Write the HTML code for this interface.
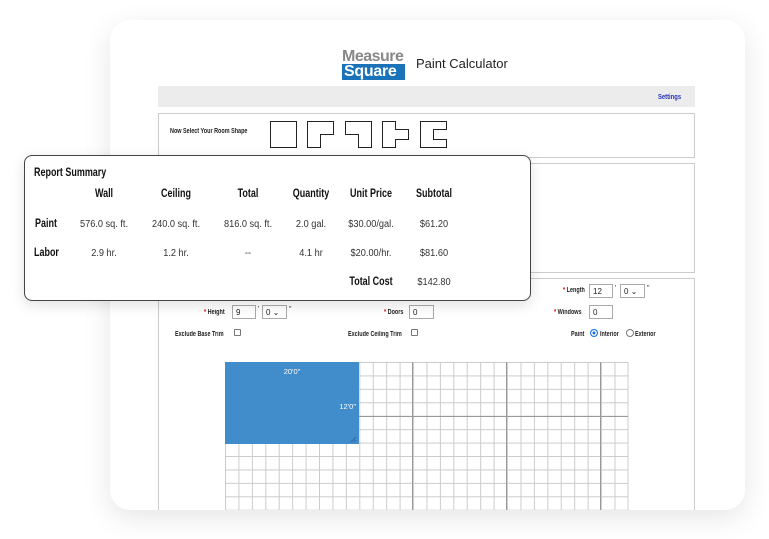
<!DOCTYPE html>
<html><head><meta charset="utf-8"><style>
*{box-sizing:border-box;margin:0;padding:0}
body{width:769px;height:539px;background:#fff;position:relative;overflow:hidden;font-family:"Liberation Sans",sans-serif;color:#222}
.a{position:absolute}
.card{left:110px;top:20px;width:635px;height:490px;background:#fff;border-radius:20px;box-shadow:0 8px 28px rgba(0,0,0,.10);overflow:hidden}
.n{font-weight:bold;transform:scaleX(.78);transform-origin:0 0;white-space:nowrap}
.box{border:1px solid #ccc;background:#fff}
.inp{border:1px solid #aaa;height:14px;font-size:8px;padding:2px 3px;background:#fff}
.sm{font-size:7px}
.red{color:#d00}
.pop{left:24px;top:155px;width:507px;height:146px;background:#fff;border:1px solid #444;border-radius:8px;box-shadow:0 4px 14px rgba(0,0,0,.12)}
.c{position:absolute;transform:translateX(-50%) scaleX(.92);white-space:nowrap;font-size:10px;color:#333}
.h{font-weight:bold;font-size:11.5px;color:#111}
.c.h{transform:translateX(-50%) scaleX(.78)}
.a.h{transform:scaleX(.78);transform-origin:0 0;white-space:nowrap}
</style></head><body>
<div class="a card"></div>
<!-- logo -->
<div class="a" style="left:342px;top:49px;font-weight:bold;font-size:16px;color:#888;letter-spacing:-0.5px;line-height:16px">Measure</div>
<div class="a" style="left:342px;top:64px;width:63px;height:16px;background:#1a73b8;color:#fff;font-weight:bold;font-size:16px;line-height:16px;padding-left:2px;letter-spacing:-0.3px">Square</div>
<div class="a" style="left:416px;top:56px;font-size:13px">Paint Calculator</div>
<div class="a" style="left:158px;top:86px;width:537px;height:21px;background:#ececec"></div>
<div class="a n" style="left:658px;top:92px;font-size:7.5px;color:#2233bb">Settings</div>
<div class="a box" style="left:158px;top:113px;width:537px;height:45px"></div>
<div class="a n" style="left:170px;top:128px;font-size:7px">Now Select Your Room Shape</div>
<svg class="a" style="left:268px;top:119px" width="182" height="32" fill="#fff" stroke="#222" stroke-width="1">
<rect x="2.5" y="2.5" width="26" height="26"/>
<path d="M39.5 2.5H65.5V15.5H52.5V28.5H39.5Z"/>
<path d="M77.5 2.5H103.5V28.5H90.5V15.5H77.5Z"/>
<path d="M114.5 2.5H127.5V10.5H140.5V20.5H127.5V28.5H114.5Z"/>
<path d="M152.5 2.5H178.5V10.5H165.5V20.5H178.5V28.5H152.5Z"/>
</svg>
<div class="a box" style="left:158px;top:163px;width:537px;height:110px"></div>
<div class="a box" style="left:158px;top:278px;width:537px;height:232px;border-bottom:none"></div>
<!-- form -->
<div class="a n sm" style="left:563px;top:287px"><span class="red">*</span> Length</div>
<div class="a inp" style="left:589px;top:284px;width:24px">12</div>
<div class="a sm" style="left:615px;top:285px">'</div>
<div class="a inp" style="left:620px;top:284px;width:25px">0 &#8964;</div>
<div class="a sm" style="left:647px;top:285px">"</div>
<div class="a n sm" style="left:204px;top:309px"><span class="red">*</span> Height</div>
<div class="a inp" style="left:232px;top:305px;width:24px">9</div>
<div class="a sm" style="left:258px;top:306px">'</div>
<div class="a inp" style="left:262px;top:305px;width:25px">0 &#8964;</div>
<div class="a sm" style="left:289px;top:306px">"</div>
<div class="a n sm" style="left:384px;top:309px"><span class="red">*</span> Doors</div>
<div class="a inp" style="left:409px;top:305px;width:25px">0</div>
<div class="a n sm" style="left:554px;top:309px"><span class="red">*</span> Windows</div>
<div class="a inp" style="left:589px;top:305px;width:24px">0</div>
<div class="a n sm" style="left:175px;top:331px">Exclude Base Trim</div>
<div class="a" style="left:234px;top:329px;width:7px;height:7px;border:1px solid #777;border-radius:1px"></div>
<div class="a n sm" style="left:348px;top:331px">Exclude Ceiling Trim</div>
<div class="a" style="left:411px;top:329px;width:7px;height:7px;border:1px solid #777;border-radius:1px"></div>
<div class="a n sm" style="left:571px;top:331px">Paint</div>
<div class="a" style="left:590px;top:329px;width:8px;height:8px;border-radius:50%;background:#1a73e8;box-shadow:inset 0 0 0 1.5px #fff;border:1px solid #1a73e8"></div>
<div class="a n sm" style="left:600px;top:331px">Interior</div>
<div class="a" style="left:626px;top:329px;width:8px;height:8px;border-radius:50%;border:1px solid #777"></div>
<div class="a n sm" style="left:635px;top:331px">Exterior</div>
<!-- grid -->
<svg class="a" style="left:225px;top:362px" width="404" height="148">
<defs><pattern id="g" width="13.43" height="13.43" patternUnits="userSpaceOnUse"><path d="M0.5 0V13.43M0 0.5H13.43" stroke="#ccc" stroke-width="1" fill="none"/></pattern></defs>
<rect width="403" height="148" fill="url(#g)"/>
<path d="M403 0V148" stroke="#ccc"/>
<path d="M187.5 0V148M281.5 0V148M375.5 0V148M0 54.5H403" stroke="#999" stroke-width="1"/>
<rect x="0" y="0" width="134" height="82" fill="#418ccb"/>
<text x="67" y="12" font-size="7.5" fill="#fff" text-anchor="middle" font-family="Liberation Sans">20'0"</text>
<text x="131" y="47" font-size="7.5" fill="#fff" text-anchor="end" font-family="Liberation Sans">12'0"</text>
<path d="M126 80L131 75M129 80L131 78" stroke="#2a5f8f" stroke-width="0.8"/>
</svg>
<!-- popup -->
<div class="a pop">
<div class="a h" style="left:9px;top:11px">Report Summary</div>
<div class="c h" style="left:79px;top:32px">Wall</div>
<div class="c h" style="left:151px;top:32px">Ceiling</div>
<div class="c h" style="left:223px;top:32px">Total</div>
<div class="c h" style="left:286px;top:32px">Quantity</div>
<div class="c h" style="left:346px;top:32px">Unit Price</div>
<div class="c h" style="left:409px;top:32px">Subtotal</div>
<div class="a h" style="left:10px;top:62px">Paint</div>
<div class="c" style="left:79px;top:63px">576.0 sq. ft.</div>
<div class="c" style="left:151px;top:63px">240.0 sq. ft.</div>
<div class="c" style="left:223px;top:63px">816.0 sq. ft.</div>
<div class="c" style="left:286px;top:63px">2.0 gal.</div>
<div class="c" style="left:346px;top:63px">$30.00/gal.</div>
<div class="c" style="left:409px;top:63px">$61.20</div>
<div class="a h" style="left:9px;top:91px">Labor</div>
<div class="c" style="left:79px;top:92px">2.9 hr.</div>
<div class="c" style="left:151px;top:92px">1.2 hr.</div>
<div class="c" style="left:223px;top:92px">--</div>
<div class="c" style="left:286px;top:92px">4.1 hr</div>
<div class="c" style="left:346px;top:92px">$20.00/hr.</div>
<div class="c" style="left:409px;top:92px">$81.60</div>
<div class="c h" style="left:346px;top:120px">Total Cost</div>
<div class="c" style="left:409px;top:121px">$142.80</div>
</div>
</body></html>
